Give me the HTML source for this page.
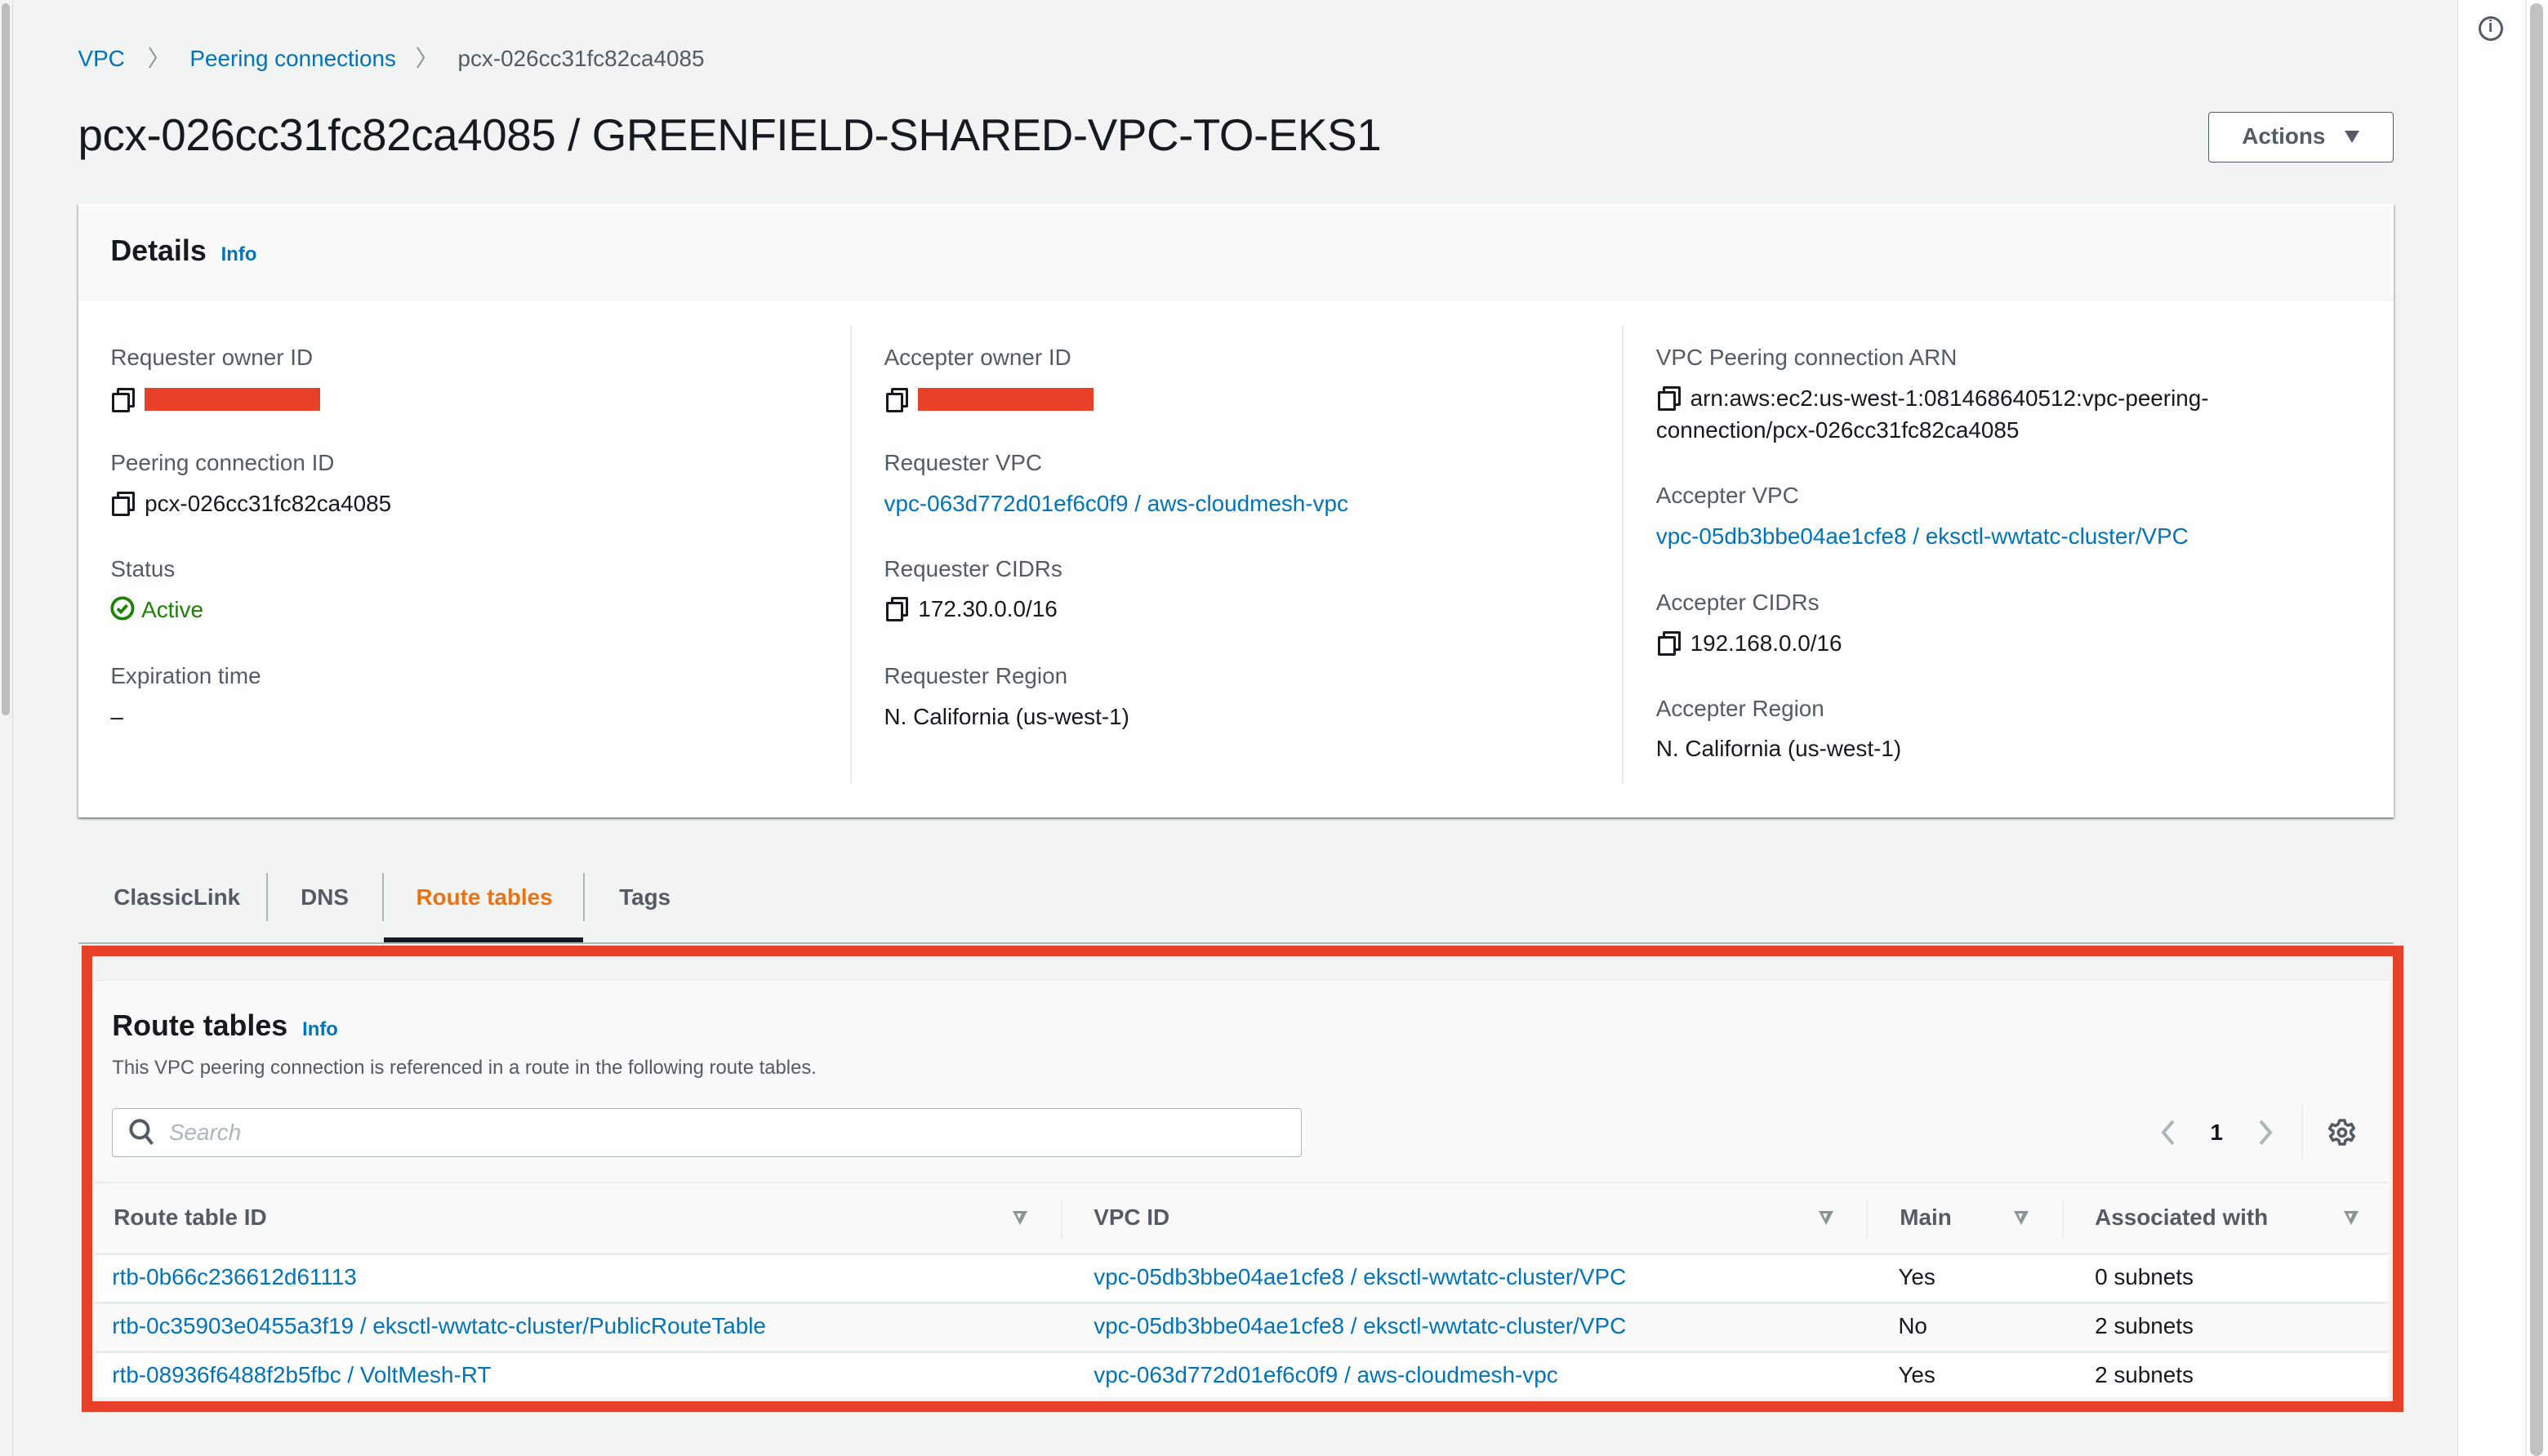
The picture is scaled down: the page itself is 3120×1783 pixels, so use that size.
<!DOCTYPE html>
<html style="background:#f2f3f3"><head><meta charset="utf-8">
<style>
html{zoom:1.99}
*{box-sizing:border-box;margin:0;padding:0}
body{width:1568px;height:896px;overflow:hidden;background:#f2f3f3;font-family:"Liberation Sans",sans-serif;color:#16191f;position:relative;font-size:14px}
.a{position:absolute;white-space:nowrap}
.lbl{color:#545b64;font-size:14px}
.v{font-size:14px;color:#16191f}
.lnk,.v.lnk{color:#0073bb}
.copy{display:inline-block;width:12px;height:13px;position:relative;vertical-align:-1px;margin-right:8px}
.copy:before{content:"";position:absolute;left:3px;top:0;width:8px;height:9px;border:2px solid #16191f;border-radius:1px}
.copy:after{content:"";position:absolute;left:0;top:3px;width:8px;height:9px;border:2px solid #16191f;background:#fff;border-radius:1px}
.red{display:inline-block;width:108px;height:14px;background:#e8412a;vertical-align:-2px}
.vd{position:absolute;width:1px;background:#eaeded}
.th{font-weight:bold;color:#545b64;font-size:14px}
.sort{position:absolute;width:0;height:0;border-left:5px solid transparent;border-right:5px solid transparent;border-top:9px solid #879596}
.sort:after{content:"";position:absolute;left:-2px;top:-7px;border-left:2px solid transparent;border-right:2px solid transparent;border-top:4px solid #fafafa}
</style></head><body>
<!-- left scrollbar -->
<div class="a" style="left:0;top:0;width:8px;height:896px;background:#f2f3f3;border-right:1px solid #d5dbdb"></div>
<div class="a" style="left:1px;top:2px;width:5px;height:438px;background:#bdbdbd;border-radius:3px"></div>
<!-- right panel -->
<div class="a" style="left:1512px;top:0;width:56px;height:896px;background:#fff;border-left:1px solid #d5dbdb"></div>
<div class="a" style="left:1554px;top:0;width:1px;height:896px;background:#eaeded"></div>
<div class="a" style="left:1557px;top:2px;width:8px;height:894px;background:#c1c1c1;border-radius:4px"></div>
<div class="a" style="left:1525px;top:10px;width:15px;height:15px;border:2px solid #545b64;border-radius:50%;font:bold 10px 'Liberation Sans';color:#545b64;text-align:center;line-height:11px">i</div>

<!-- breadcrumb -->
<div class="a" style="left:48px;top:25px;font-size:14px"><span class="lnk">VPC</span><span style="color:#879596;margin:0 12px 0 14px">&#x232A;</span><span class="lnk">Peering connections</span><span style="color:#879596;margin:0 12px 0 12px">&#x232A;</span><span style="color:#545b64">pcx-026cc31fc82ca4085</span></div>
<div class="a" style="left:48px;top:67px;font-size:27.5px;letter-spacing:-0.2px">pcx-026cc31fc82ca4085 / GREENFIELD-SHARED-VPC-TO-EKS1</div>
<div class="a" style="left:1359px;top:69px;width:114px;height:31px;background:#fff;border:1px solid #545b64;border-radius:2px;font-weight:bold;color:#545b64;font-size:14px;line-height:29px;padding-left:20px">Actions<span style="position:absolute;left:83px;top:11px;border-left:5px solid transparent;border-right:5px solid transparent;border-top:8px solid #545b64"></span></div>

<!-- details card -->
<div class="a" style="left:48px;top:125px;width:1425px;height:378px;background:#fff;box-shadow:0 1px 1px rgba(0,28,36,.3),1px 1px 1px rgba(0,28,36,.15),-1px 1px 1px rgba(0,28,36,.15)"></div>
<div class="a" style="left:48px;top:125px;width:1425px;height:60px;background:#fafafa;border-bottom:1px solid #eaeded"></div>
<div class="a" style="left:68px;top:144px;font-size:18px;font-weight:bold">Details <span class="lnk" style="font-size:12px;margin-left:4px">Info</span></div>
<div class="vd" style="left:523px;top:200px;height:282px"></div>
<div class="vd" style="left:998px;top:200px;height:282px"></div>

<div class="a lbl" style="left:68px;top:212px">Requester owner ID</div>
<div class="a v" style="left:69px;top:238px"><span class="copy"></span><span class="red"></span></div>
<div class="a lbl" style="left:68px;top:277px">Peering connection ID</div>
<div class="a v" style="left:69px;top:302px"><span class="copy"></span>pcx-026cc31fc82ca4085</div>
<div class="a lbl" style="left:68px;top:342px">Status</div>
<div class="a v" style="left:68px;top:367px;color:#1d8102"><svg width="15" height="15" viewBox="0 0 16 16" style="vertical-align:-2px;margin-right:4px"><circle cx="8" cy="8" r="6.8" fill="none" stroke="#1d8102" stroke-width="2"/><path d="M4.8 8.2l2.2 2.2 4-4.4" fill="none" stroke="#1d8102" stroke-width="2"/></svg>Active</div>
<div class="a lbl" style="left:68px;top:408px">Expiration time</div>
<div class="a v" style="left:68px;top:433px">–</div>

<div class="a lbl" style="left:544px;top:212px">Accepter owner ID</div>
<div class="a v" style="left:545px;top:238px"><span class="copy"></span><span class="red"></span></div>
<div class="a lbl" style="left:544px;top:277px">Requester VPC</div>
<div class="a v lnk" style="left:544px;top:302px">vpc-063d772d01ef6c0f9 / aws-cloudmesh-vpc</div>
<div class="a lbl" style="left:544px;top:342px">Requester CIDRs</div>
<div class="a v" style="left:545px;top:367px"><span class="copy"></span>172.30.0.0/16</div>
<div class="a lbl" style="left:544px;top:408px">Requester Region</div>
<div class="a v" style="left:544px;top:433px">N. California (us-west-1)</div>

<div class="a lbl" style="left:1019px;top:212px">VPC Peering connection ARN</div>
<div class="a v" style="left:1020px;top:237px"><span class="copy"></span>arn:aws:ec2:us-west-1:081468640512:vpc-peering-</div>
<div class="a v" style="left:1019px;top:257px">connection/pcx-026cc31fc82ca4085</div>
<div class="a lbl" style="left:1019px;top:297px">Accepter VPC</div>
<div class="a v lnk" style="left:1019px;top:322px">vpc-05db3bbe04ae1cfe8 / eksctl-wwtatc-cluster/VPC</div>
<div class="a lbl" style="left:1019px;top:363px">Accepter CIDRs</div>
<div class="a v" style="left:1020px;top:388px"><span class="copy"></span>192.168.0.0/16</div>
<div class="a lbl" style="left:1019px;top:428px">Accepter Region</div>
<div class="a v" style="left:1019px;top:453px">N. California (us-west-1)</div>

<!-- tabs -->
<div class="a" style="left:70px;top:544px;font-weight:bold;color:#545b64">ClassicLink</div>
<div class="a" style="left:164px;top:537px;width:1px;height:30px;background:#aab7b8"></div>
<div class="a" style="left:185px;top:544px;font-weight:bold;color:#545b64">DNS</div>
<div class="a" style="left:235px;top:537px;width:1px;height:30px;background:#aab7b8"></div>
<div class="a" style="left:256px;top:544px;font-weight:bold;color:#ec7211">Route tables</div>
<div class="a" style="left:236px;top:577px;width:123px;height:4px;background:#16191f"></div>
<div class="a" style="left:359px;top:537px;width:1px;height:30px;background:#aab7b8"></div>
<div class="a" style="left:381px;top:544px;font-weight:bold;color:#545b64">Tags</div>
<div class="a" style="left:48px;top:580px;width:1425px;height:1px;background:#aab7b8"></div>

<!-- route tables card -->
<div class="a" style="left:58px;top:603px;width:1412px;height:257px;background:#fafafa;border-top:1px solid #eaeded"></div>
<div class="a" style="left:69px;top:621px;font-size:18px;font-weight:bold">Route tables <span class="lnk" style="font-size:12px;margin-left:4px">Info</span></div>
<div class="a" style="left:69px;top:650px;font-size:12px;color:#545b64">This VPC peering connection is referenced in a route in the following route tables.</div>
<div class="a" style="left:69px;top:682px;width:732px;height:30px;background:#fff;border:1px solid #aab7b8;border-radius:2px"></div>
<svg class="a" style="left:79px;top:688px" width="17" height="18" viewBox="0 0 17 18"><circle cx="7" cy="7" r="5.3" fill="none" stroke="#545b64" stroke-width="2"/><path d="M10.8 11l4 5" stroke="#545b64" stroke-width="2"/></svg>
<div class="a" style="left:104px;top:689px;font-style:italic;color:#aab7b8;font-size:14px">Search</div>
<svg class="a" style="left:1328px;top:688px" width="12" height="18" viewBox="0 0 12 18"><path d="M9 2L3 9l6 7" fill="none" stroke="#aab7b8" stroke-width="2"/></svg>
<div class="a" style="left:1360px;top:689px;font-weight:bold;font-size:14px">1</div>
<svg class="a" style="left:1388px;top:688px" width="12" height="18" viewBox="0 0 12 18"><path d="M3 2l6 7-6 7" fill="none" stroke="#aab7b8" stroke-width="2"/></svg>
<div class="a" style="left:1416px;top:680px;width:1px;height:33px;background:#eaeded"></div>
<svg class="a" style="left:1432px;top:688px" width="18" height="18" viewBox="0 0 18 18"><path d="M7.5 1.5h3l.5 2.2 1.6.9 2.1-.8 1.5 2.6-1.7 1.5v1.8l1.7 1.5-1.5 2.6-2.1-.8-1.6.9-.5 2.2h-3l-.5-2.2-1.6-.9-2.1.8-1.5-2.6 1.7-1.5V8.1L1.3 6.6l1.5-2.6 2.1.8 1.6-.9z" fill="none" stroke="#545b64" stroke-width="1.8" stroke-linejoin="round"/><circle cx="9" cy="9" r="2.3" fill="none" stroke="#545b64" stroke-width="1.8"/></svg>

<!-- table -->
<div class="a" style="left:58px;top:727px;width:1412px;height:1px;background:#eaeded"></div>
<div class="a th" style="left:70px;top:741px">Route table ID</div>
<div class="sort" style="left:623px;top:745px"></div>
<div class="a" style="left:653px;top:738px;width:1px;height:24px;background:#eaeded"></div>
<div class="a th" style="left:673px;top:741px">VPC ID</div>
<div class="sort" style="left:1119px;top:745px"></div>
<div class="a" style="left:1148px;top:738px;width:1px;height:24px;background:#eaeded"></div>
<div class="a th" style="left:1169px;top:741px">Main</div>
<div class="sort" style="left:1239px;top:745px"></div>
<div class="a" style="left:1269px;top:738px;width:1px;height:24px;background:#eaeded"></div>
<div class="a th" style="left:1289px;top:741px">Associated with</div>
<div class="sort" style="left:1442px;top:745px"></div>

<div class="a" style="left:58px;top:771px;width:1412px;height:30px;background:#fff;border-top:2px solid #eaeded"></div>
<div class="a" style="left:58px;top:801px;width:1412px;height:30px;background:#fafafa;border-top:2px solid #eaeded"></div>
<div class="a" style="left:58px;top:831px;width:1412px;height:29px;background:#fff;border-top:2px solid #eaeded"></div>

<div class="a lnk" style="left:69px;top:778px">rtb-0b66c236612d61113</div>
<div class="a lnk" style="left:673px;top:778px">vpc-05db3bbe04ae1cfe8 / eksctl-wwtatc-cluster/VPC</div>
<div class="a" style="left:1168px;top:778px">Yes</div>
<div class="a" style="left:1289px;top:778px">0 subnets</div>
<div class="a lnk" style="left:69px;top:808px">rtb-0c35903e0455a3f19 / eksctl-wwtatc-cluster/PublicRouteTable</div>
<div class="a lnk" style="left:673px;top:808px">vpc-05db3bbe04ae1cfe8 / eksctl-wwtatc-cluster/VPC</div>
<div class="a" style="left:1168px;top:808px">No</div>
<div class="a" style="left:1289px;top:808px">2 subnets</div>
<div class="a lnk" style="left:69px;top:838px">rtb-08936f6488f2b5fbc / VoltMesh-RT</div>
<div class="a lnk" style="left:673px;top:838px">vpc-063d772d01ef6c0f9 / aws-cloudmesh-vpc</div>
<div class="a" style="left:1168px;top:838px">Yes</div>
<div class="a" style="left:1289px;top:838px">2 subnets</div>

<!-- red highlight box -->
<div class="a" style="left:50px;top:582px;width:1429px;height:287px;border:7px solid #e8412a"></div>
</body></html>
